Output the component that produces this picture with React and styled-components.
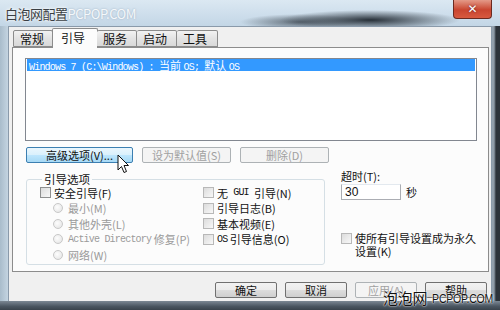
import styled, { createGlobalStyle } from 'styled-components';

const Global = createGlobalStyle`
body{margin:0;background:#3b4550;font-family:"Noto Sans CJK SC","Liberation Sans",sans-serif;}
`;

const Win = styled.div`
position:relative;
width:500px;
height:310px;
overflow:hidden;
display:flex;
flex-direction:column;
background:linear-gradient(90deg,#a9bccb 0,#c4d4e1 8px,#c4d4e1 480px,#8d9aa6 494px,#2c333a 496px);
`;

const TitleBar = styled.div`
height:26px;
flex:none;
display:flex;
align-items:flex-start;
background:
  radial-gradient(ellipse 90px 10px at 370px 20px,rgba(30,38,46,.95),rgba(30,38,46,0)),
  radial-gradient(ellipse 60px 8px at 300px 22px,rgba(50,60,70,.7),rgba(50,60,70,0)),
  linear-gradient(180deg,#dbe8f2,#c3d6e6);
`;

const Title = styled.div`
margin:4px 0 0 5px;
font-size:13px;
color:#3a3f44;
text-shadow:0 0 4px #fff,0 0 2px #fff;
letter-spacing:-0.5px;
white-space:nowrap;
span{color:#f4f8fb;text-shadow:0 0 2px #9ab;}
`;

const Close = styled.div`
margin-left:auto;
margin-right:8px;
width:37px;
height:18px;
border:1px solid #6b2a20;
border-top:none;
border-radius:0 0 4px 4px;
background:linear-gradient(180deg,#e49a88,#c9452f 55%,#d8593f);
display:flex;
align-items:center;
justify-content:center;
color:#fff;
font:bold 12px "DejaVu Sans",sans-serif;
text-shadow:0 0 2px #512;
`;

const Client = styled.div`
margin:0 8px 0 8px;
height:273px;
flex:none;
background:#f0f0f0;
border:1px solid #8a9aaa;
border-bottom:none;
display:flex;
flex-direction:column;
padding:1px 2px 0 3px;
`;

const Tabs = styled.div`
display:flex;
align-items:flex-end;
height:19px;
margin-left:1px;
position:relative;
z-index:1;
`;

const Tab = styled.div`
width:${p => p.w}px;
height:${p => (p.on ? 20 : 17)}px;
margin-bottom:${p => (p.on ? -1 : 0)}px;
margin-left:${p => (p.on ? -1 : 0)}px;
margin-right:${p => (p.on ? -1 : 0)}px;
box-sizing:border-box;
border:1px solid #8c8c8c;
border-bottom:${p => (p.on ? 'none' : '1px solid #8c8c8c')};
border-left:${p => (p.first || p.on ? '1px solid #8c8c8c' : 'none')};
border-radius:2px 2px 0 0;
background:${p => (p.on ? '#fcfcfc' : 'linear-gradient(180deg,#f2f2f2,#e3e3e3 50%,#d9d9d9)')};
font-size:12px;
line-height:${p => (p.on ? 18 : 15)}px;
padding-left:${p => (p.on ? 8 : 6)}px;
color:#111;
`;

const Panel = styled.div`
width:477px;
height:225px;
box-sizing:border-box;
border:1px solid #8c8c8c;
background:#fcfcfc;
padding:10px 12px 0 12px;
display:flex;
flex-direction:column;
`;

const List = styled.div`
width:452px;
height:83px;
box-sizing:border-box;
border:1px solid #828790;
background:#fff;
padding:0 1px;
`;

const Row = styled.div`
height:12px;
background:#3399ff;
color:#fff;
font-size:11px;
line-height:12px;
padding-left:2px;
white-space:nowrap;
`;

const Mono = styled.span`
font-family:"Liberation Mono",monospace;
font-size:10px;
letter-spacing:-0.8px;
`;

const BtnRow = styled.div`
display:flex;
gap:9px;
margin-top:6px;
margin-left:1px;
`;

const Btn = styled.div`
width:${p => p.w}px;
height:16px;
box-sizing:border-box;
border:1px solid ${p => (p.hover ? '#3c7fb1' : p.off ? '#adb2b5' : '#707070')};
border-radius:2px;
background:${p => p.hover
    ? 'linear-gradient(180deg,#eaf6fd,#d9f0fc 50%,#bee6fd 51%,#a7d9f5)'
    : p.off ? '#f4f4f4' : 'linear-gradient(180deg,#f2f2f2,#ebebeb 50%,#dddddd 51%,#cfcfcf)'};
color:${p => (p.off ? '#a0a0a0' : '#111')};
font-size:11px;
line-height:14px;
text-align:center;
white-space:nowrap;
`;

const Lower = styled.div`
display:flex;
margin-top:7px;
`;

const Group = styled.fieldset`
margin:3px 0 0 1px;
padding:0 0 0 13px;
width:303px;
height:92px;
box-sizing:border-box;
border:1px solid #d5dfe5;
border-radius:3px;
display:flex;
align-items:flex-start;
legend{font-size:11.5px;color:#111;padding:0 2px;margin-left:2px;line-height:12px;}
`;

const Col = styled.div`
display:flex;
flex-direction:column;
width:${p => p.w}px;
`;

const Item = styled.div`
display:flex;
align-items:center;
height:15.5px;
margin-left:${p => p.indent || 0}px;
font-size:11px;
color:${p => (p.off ? '#9a9a9a' : '#111')};
white-space:nowrap;
`;

const Box = styled.span`
width:9px;
height:9px;
flex:none;
border:1px solid ${p => (p.off ? '#b8b8b8' : '#8e8f8f')};
background:linear-gradient(135deg,#dcdcdc,#f8f8f8);
margin-right:3px;
`;

const Radio = styled.span`
width:8px;
height:8px;
flex:none;
border-radius:50%;
border:1px solid #c8c8c8;
background:radial-gradient(circle at 40% 40%,#fdfdfd,#e2e2e2);
margin-right:5px;
`;

const Side = styled.div`
margin-left:16px;
display:flex;
flex-direction:column;
font-size:11px;
color:#111;
white-space:nowrap;
`;

const Label = styled.div`
line-height:12px;
`;

const InputLine = styled.div`
display:flex;
align-items:center;
gap:5px;
margin-top:2px;
`;

const Input = styled.div`
width:60px;
height:16px;
box-sizing:border-box;
border:1px solid #abadb3;
border-top-color:#e3e9ef;
background:#fff;
font-size:12px;
line-height:14px;
padding-left:3px;
font-family:"Liberation Sans",sans-serif;
`;

const Perm = styled.div`
display:flex;
align-items:flex-start;
margin-top:32px;
line-height:12.5px;
span:first-child{margin-top:1px;}
`;

const Footer = styled.div`
display:flex;
justify-content:flex-end;
gap:8px;
padding:10px 2px 0 0;
`;

const BottomFrame = styled.div`
flex:1;
background:linear-gradient(180deg,#7c8894,#4a5560 60%,#3a434c);
`;

const Cursor = styled.svg`
position:absolute;
left:117px;
top:154px;
`;

const Mark = styled.div`
position:absolute;
left:383px;
top:287px;
display:flex;
align-items:center;
font-size:15px;
color:#111;
white-space:nowrap;
letter-spacing:-0.3px;
text-shadow:0 0 2px #fff,0 0 1px #fff;
span{display:inline-block;font-family:"Liberation Sans",sans-serif;font-size:10.5px;margin-left:5px;letter-spacing:-0.2px;transform:scale(1,1.3);}
`;

export default function App() {
  return <Win>
    <Global />
    <TitleBar>
      <Title>白泡网配置<span>PCPOP.COM</span></Title>
      <Close>✕</Close>
    </TitleBar>
    <Client>
      <Tabs>
        <Tab w={40} first>常规</Tab>
        <Tab w={46} on>引导</Tab>
        <Tab w={40}>服务</Tab>
        <Tab w={40}>启动</Tab>
        <Tab w={41}>工具</Tab>
      </Tabs>
      <Panel>
        <List>
          <Row><Mono>Windows 7 (C:\Windows) : </Mono>当前 <Mono>OS; </Mono>默认 <Mono>OS</Mono></Row>
        </List>
        <BtnRow>
          <Btn w={107} hover>高级选项(V)...</Btn>
          <Btn w={89} off>设为默认值(S)</Btn>
          <Btn w={89} off>删除(D)</Btn>
        </BtnRow>
        <Lower>
          <Group>
            <legend>引导选项</legend>
            <Col w={163}>
              <Item><Box />安全引导(F)</Item>
              <Item off indent={13}><Radio />最小(M)</Item>
              <Item off indent={13}><Radio />其他外壳(L)</Item>
              <Item off indent={13}><Radio /><Mono>Active Directory </Mono>&nbsp;修复(P)</Item>
              <Item off indent={13}><Radio />网络(W)</Item>
            </Col>
            <Col>
              <Item><Box off />无 <Mono>&nbsp;GUI&nbsp;</Mono> 引导(N)</Item>
              <Item><Box off />引导日志(B)</Item>
              <Item><Box off />基本视频(E)</Item>
              <Item><Box off /><Mono>OS </Mono>&nbsp;引导信息(O)</Item>
            </Col>
          </Group>
          <Side>
            <Label>超时(T):</Label>
            <InputLine><Input>30</Input>秒</InputLine>
            <Perm><Box off /><span>使所有引导设置成为永久<br />设置(K)</span></Perm>
          </Side>
        </Lower>
      </Panel>
      <Footer>
        <Btn w={62}>确定</Btn>
        <Btn w={62}>取消</Btn>
        <Btn w={62} off>应用(A)</Btn>
        <Btn w={62}>帮助</Btn>
      </Footer>
    </Client>
    <BottomFrame />
    <Cursor width="13" height="20" viewBox="0 0 13 20">
      <path d="M1 1 L1 16 L4.5 12.5 L7 18.5 L9.5 17.5 L7 11.5 L11.5 11.5 Z" fill="#fff" stroke="#111" strokeWidth="1" strokeLinejoin="round" />
    </Cursor>
    <Mark>泡泡网<span>PCPOP.COM</span></Mark>
  </Win>;
}
